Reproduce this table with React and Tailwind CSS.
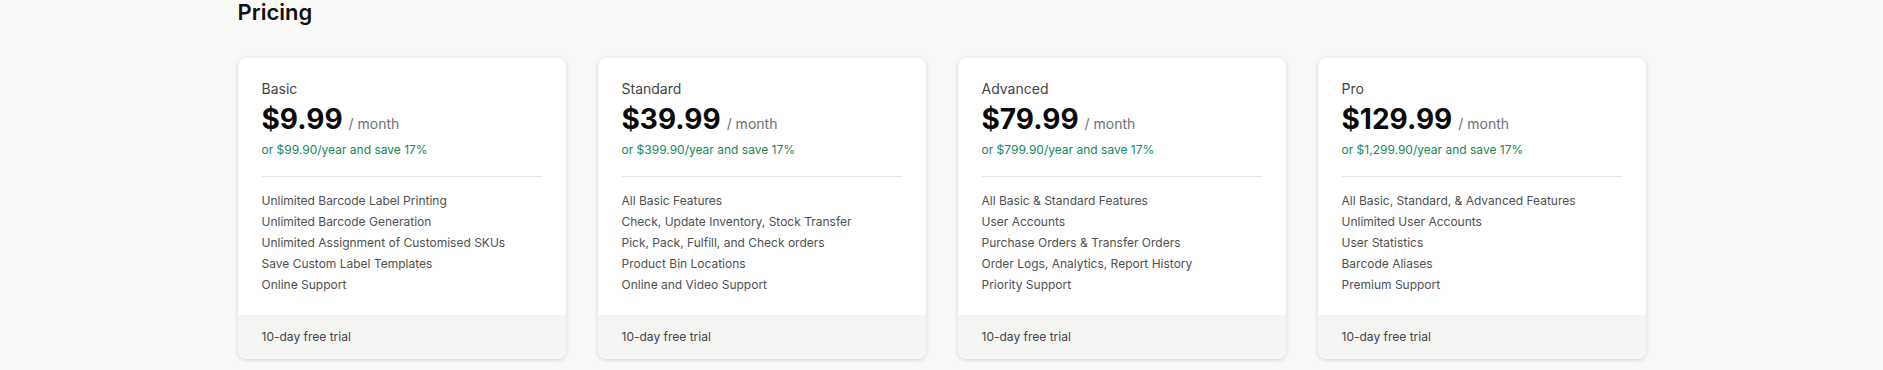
import React from 'react'

const plans = [
    {
        name: 'Basic',
        price: '$9.99',
        yearly: 'or $99.90/year and save 17%',
        features: [
            'Unlimited Barcode Label Printing',
            'Unlimited Barcode Generation',
            'Unlimited Assignment of Customised SKUs',
            'Save Custom Label Templates',
            'Online Support',
        ],
    },
    {
        name: 'Standard',
        price: '$39.99',
        yearly: 'or $399.90/year and save 17%',
        features: [
            'All Basic Features',
            'Check, Update Inventory, Stock Transfer',
            'Pick, Pack, Fulfill, and Check orders',
            'Product Bin Locations',
            'Online and Video Support',
        ],
    },
    {
        name: 'Advanced',
        price: '$79.99',
        yearly: 'or $799.90/year and save 17%',
        features: [
            'All Basic & Standard Features',
            'User Accounts',
            'Purchase Orders & Transfer Orders',
            'Order Logs, Analytics, Report History',
            'Priority Support',
        ],
    },
    {
        name: 'Pro',
        price: '$129.99',
        yearly: 'or $1,299.90/year and save 17%',
        features: [
            'All Basic, Standard, & Advanced Features',
            'Unlimited User Accounts',
            'User Statistics',
            'Barcode Aliases',
            'Premium Support',
        ],
    },
]

const PlanCard = ({ plan }) => (
    <div className="bg-white rounded-lg shadow-[0_1px_4px_rgba(0,0,0,0.16)] overflow-hidden flex flex-col">
        <div className="px-6 pt-[21px] pb-5 flex-1">
            <div className="text-sm leading-5 text-[#454545]">{plan.name}</div>
            <div className="flex items-baseline gap-1.5 mt-[2px]">
                <span className="text-[28px] leading-9 font-bold text-[#0a0a0a]">{plan.price}</span>
                <span className="text-sm text-[#6f6f6f]">/ month</span>
            </div>
            <div className="mt-[3px] text-xs leading-5 text-[#17875a]">{plan.yearly}</div>
            <div className="mt-4 h-px bg-[#e5e5e5]"></div>
            <ul className="mt-[13px]">
                {plan.features.map((f, i) => (
                    <li key={plan.name + i} className="text-xs leading-[21px] text-[#505050]">{f}</li>
                ))}
            </ul>
        </div>
        <div className="bg-[#f4f4f3] px-6 py-3 text-xs leading-5 text-[#454545]">10-day free trial</div>
    </div>
)

export default function App() {
    return (
        <div className="min-h-[370px] bg-[#f9f9f8] overflow-hidden" style={{ fontFamily: 'Inter, "Noto Sans", sans-serif' }}>
            <div className="w-[1408px] mx-auto">
                <h2 className="text-[22px] leading-[22px] font-semibold text-[#111111] mt-px">Pricing</h2>
                <div className="grid grid-cols-4 gap-8 mt-[35px]">
                    {plans.map((p) => (
                        <PlanCard key={p.name} plan={p} />
                    ))}
                </div>
            </div>
        </div>
    )
}
